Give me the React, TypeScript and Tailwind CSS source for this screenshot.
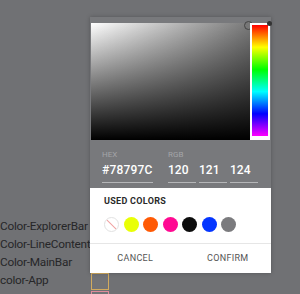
const labels = ['Color-ExplorerBar', 'Color-LineContent', 'Color-MainBar', 'color-App', ''];
const boxBorders = ['border-[#c9a35a]', 'border-[#c9a35a]', 'border-[#c9a35a]', 'border-[#d2ab5e]', 'border-[#e08a9a]'];

const usedColors = ['#e9ff06', '#ff5a05', '#ff0a92', '#0d0d0d', '#0536ff', '#7b7b7e'];

const App = () => {
  return (
    <div className="relative w-[300px] h-[294px] overflow-hidden bg-[#707174] font-['Roboto',sans-serif]">
      {/* setting rows */}
      <div className="flex flex-col pt-[217px]">
        {labels.map((label, i) => (
          <div key={i} className="flex items-center h-[18px]">
            <span className="w-[91px] text-[11.8px] leading-[18px] tracking-[-0.25px] text-[#262628] whitespace-nowrap">{label}</span>
            <div className={`w-[18px] h-[17px] mt-[3px] border ${boxBorders[i]} bg-[#727376]`} />
          </div>
        ))}
      </div>

      {/* color picker popover */}
      <div className="absolute left-[90px] top-[17px] w-[181px] h-[256px] flex flex-col bg-[#78797c] shadow-[0_0_4px_rgba(0,0,0,0.25)]">
        <div className="flex pt-[6px] pl-[1px] pr-[1px]">
          <div className="relative w-[159px] h-[117px] bg-[linear-gradient(to_right,#ffffff,#7a7a7a)]">
            <div className="absolute inset-0 bg-[linear-gradient(to_bottom,rgba(0,0,0,0),#000000)]" />
            <div className="absolute right-[-3px] top-[-2px] w-[9px] h-[9px] rounded-full border border-[#444] bg-[#777]" />
          </div>
          <div className="relative w-[20px] h-[117px] bg-white p-[2px] pb-[4px]">
            <div className="w-full h-full bg-[linear-gradient(to_bottom,#ff0000,#ffff00,#00ff00,#00ffff,#0000ff,#ff00ff)]" />
            <div className="absolute right-[-2px] top-[-2px] w-[5px] h-[5px] rounded-full bg-[#333]" />
          </div>
        </div>

        {/* hex / rgb */}
        <div className="flex h-[48px] pl-[12px] pt-[10px] gap-[15px]">
          <div className="flex flex-col w-[51px]">
            <span className="text-[8px] leading-[10px] text-[#a4a5a8]">HEX</span>
            <span className="text-[12px] leading-[16px] mt-[2px] text-white font-medium tracking-[0.2px]">#78797C</span>
            <div className="h-px bg-[#b5b6b8] mt-[4px]" />
          </div>
          <div className="flex flex-col">
            <span className="text-[8px] leading-[10px] text-[#a4a5a8]">RGB</span>
            <div className="flex gap-[3px] mt-[2px]">
              {['120', '121', '124'].map((v) => (
                <div key={v} className="flex flex-col w-[28px]">
                  <span className="text-[12px] leading-[16px] text-white font-medium">{v}</span>
                  <div className="h-px bg-[#b5b6b8] mt-[4px]" />
                </div>
              ))}
            </div>
          </div>
        </div>

        {/* used colors */}
        <div className="flex-1 flex flex-col bg-white">
          <div className="px-[14px] pt-[8px]">
            <div className="text-[9px] leading-[11px] font-bold text-[#2a2a2a] tracking-[0.3px]">USED COLORS</div>
            <div className="flex gap-[4.5px] mt-[10px]">
              <div className="relative w-[15px] h-[15px] rounded-full border border-[#e2e2e2] bg-white overflow-hidden">
                <div className="absolute left-1/2 top-[-2px] w-px h-[19px] bg-[#f0a0a0] -rotate-45" />
              </div>
              {usedColors.map((c) => (
                <div key={c} className="w-[15px] h-[15px] rounded-full" style={{ backgroundColor: c }} />
              ))}
            </div>
          </div>
          <div className="h-px bg-[#e6e6e6] mt-[11px]" />
          <div className="flex flex-1 items-center">
            <button className="flex-1 text-[9px] text-[#555] tracking-[0.3px] pl-[2px]">CANCEL</button>
            <button className="flex-1 text-[9px] text-[#555] tracking-[0.3px] pl-[6px]">CONFIRM</button>
          </div>
        </div>
      </div>
    </div>
  );
};

export default App;
